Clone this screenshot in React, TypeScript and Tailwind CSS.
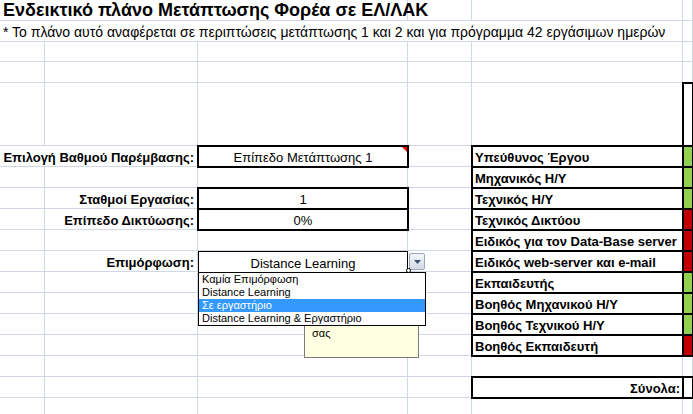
import React from 'react'

const grid = "border-r border-b border-[#d0d7e5]";
const box = "-m-px border-2 border-black relative z-10";
const font = "font-['Liberation_Sans',Arial,sans-serif]";

const roles: { name: string; ok: boolean }[] = [
    { name: "Υπεύθυνος Έργου", ok: true },
    { name: "Μηχανικός Η/Υ", ok: true },
    { name: "Τεχνικός Η/Υ", ok: true },
    { name: "Τεχνικός Δικτύου", ok: false },
    { name: "Ειδικός για τον Data-Base server", ok: false },
    { name: "Ειδικός web-server και e-mail", ok: false },
    { name: "Εκπαιδευτής", ok: true },
    { name: "Βοηθός Μηχανικού Η/Υ", ok: true },
    { name: "Βοηθός Τεχνικού Η/Υ", ok: true },
    { name: "Βοηθός Εκπαιδευτή", ok: false },
];

const Blank = () => <div className={grid} />;

// label in column B, right aligned
const Label = ({ text }: { text: string }) => (
    <div className={`${grid} flex items-end justify-end pr-[3px] pb-[2px] font-bold text-[13px] leading-none`}>
        {text}
    </div>
);

const InputBox = ({ text, note }: { text: string; note?: boolean }) => (
    <div className={`${box} flex items-end justify-center pb-[2px] text-[13px] leading-none`}>
        {text}
        {note && (
            <span className="absolute top-0 right-0 w-0 h-0 border-t-[5px] border-l-[5px] border-t-[#ff0000] border-l-transparent" />
        )}
    </div>
);

const RoleRow = ({ name, ok }: { name: string; ok: boolean }) => (
    <>
        <div className={`${box} flex items-end pl-[2px] pb-[2px] font-bold text-[13px] leading-none`}>{name}</div>
        <div className={`${box} ${ok ? 'bg-[#92d050]' : 'bg-[#c00000]'}`} />
    </>
);

const App: React.FC = () => {
    // left column content per row, aligned to role rows 5..14
    const left: React.ReactNode[] = [
        <>
            <div className={`col-span-2 ${grid} flex items-end justify-end pr-[3px] pb-[2px] font-bold text-[13px] leading-none`}>
                Επιλογή Βαθμού Παρέμβασης:
            </div>
            <InputBox text="Επίπεδο Μετάπτωσης 1" note />
            <Blank />
        </>,
        <><Blank /><Blank /><Blank /><Blank /></>,
        <><Blank /><Label text="Σταθμοί Εργασίας:" /><InputBox text="1" /><Blank /></>,
        <><Blank /><Label text="Επίπεδο Δικτύωσης:" /><InputBox text="0%" /><Blank /></>,
        <><Blank /><Blank /><Blank /><Blank /></>,
        <>
            <Blank />
            <Label text="Επιμόρφωση:" />
            <div className="border border-black border-b-0 flex items-end justify-center pb-[2px] text-[13px] leading-none relative z-10">
                Distance Learning
            </div>
            <Blank />
        </>,
    ];

    return (
        <div className={`w-[693px] h-[414px] overflow-hidden bg-white text-black relative ${font}`}>
            <div className="grid grid-cols-[45px_153px_210px_64px_211px_10px] grid-rows-[21px_21px_20px_21px_63px_repeat(12,21px)_20px]">
                {/* title */}
                <div className={`col-span-3 ${grid} flex items-center pl-[3px] font-bold text-[18px] leading-none whitespace-nowrap`}>
                    Ενδεικτικό πλάνο Μετάπτωσης Φορέα σε ΕΛ/ΛΑΚ
                </div>
                <Blank /><Blank /><Blank />

                <div className={`col-span-5 ${grid} flex items-end pl-[3px] pb-[2px] text-[14px] leading-none whitespace-nowrap`}>
                    * Το πλάνο αυτό αναφέρεται σε περιπτώσεις μετάπτωσης 1 και 2 και για πρόγραμμα 42 εργάσιμων ημερών
                </div>
                <Blank />

                <Blank /><Blank /><Blank /><Blank /><Blank /><Blank />
                <Blank /><Blank /><Blank /><Blank /><Blank /><Blank />

                <Blank /><Blank /><Blank /><Blank /><Blank />
                <div className={box} />

                {roles.map((r, i) => (
                    <React.Fragment key={r.name}>
                        {left[i] ?? <><Blank /><Blank /><Blank /><Blank /></>}
                        <RoleRow name={r.name} ok={r.ok} />
                    </React.Fragment>
                ))}

                <Blank /><Blank /><Blank /><Blank /><Blank /><Blank />

                <Blank /><Blank /><Blank /><Blank />
                <div className={`${box} flex items-end justify-end pr-[2px] pb-[2px] font-bold text-[13px] leading-none`}>Σύνολα:</div>
                <div className={box} />

                <Blank /><Blank /><Blank /><Blank /><Blank /><Blank />
            </div>

            {/* dropdown button of the validation list */}
            <div className="absolute left-[409px] top-[253px] w-[16px] h-[17px] z-20 border border-[#9aa6bd] rounded-[2px] bg-gradient-to-b from-[#f4f6fa] to-[#d3d9e4] flex items-center justify-center">
                <svg width="7" height="4" viewBox="0 0 7 4"><path d="M0 0h7L3.5 4z" fill="#3d4f73" /></svg>
            </div>

            {/* comment box */}
            <div className="absolute left-[304px] top-[300px] w-[115px] h-[58px] z-20 bg-[#ffffe1] border border-[#7a7a7a] text-[11px]">
                <span className="absolute left-[7px] top-[27px] leading-none">σας</span>
            </div>

            {/* dropdown list */}
            <div className="absolute left-[198px] top-[272px] w-[228px] h-[54px] z-30 bg-white border border-black text-[11px] leading-[13px]">
                <div className="h-[13px] pl-[3px] whitespace-nowrap">Καμία Επιμόρφωση</div>
                <div className="h-[13px] pl-[3px] whitespace-nowrap">Distance Learning</div>
                <div className="h-[13px] pl-[3px] whitespace-nowrap bg-[#3399ff] text-white">Σε εργαστήριο</div>
                <div className="h-[13px] pl-[3px] whitespace-nowrap">Distance Learning &amp; Εργαστήριο</div>
            </div>
            <div className="absolute left-[406px] top-[268px] w-[5px] h-[5px] z-40 rounded-full border border-black bg-white" />
        </div>
    )
}

export default App
